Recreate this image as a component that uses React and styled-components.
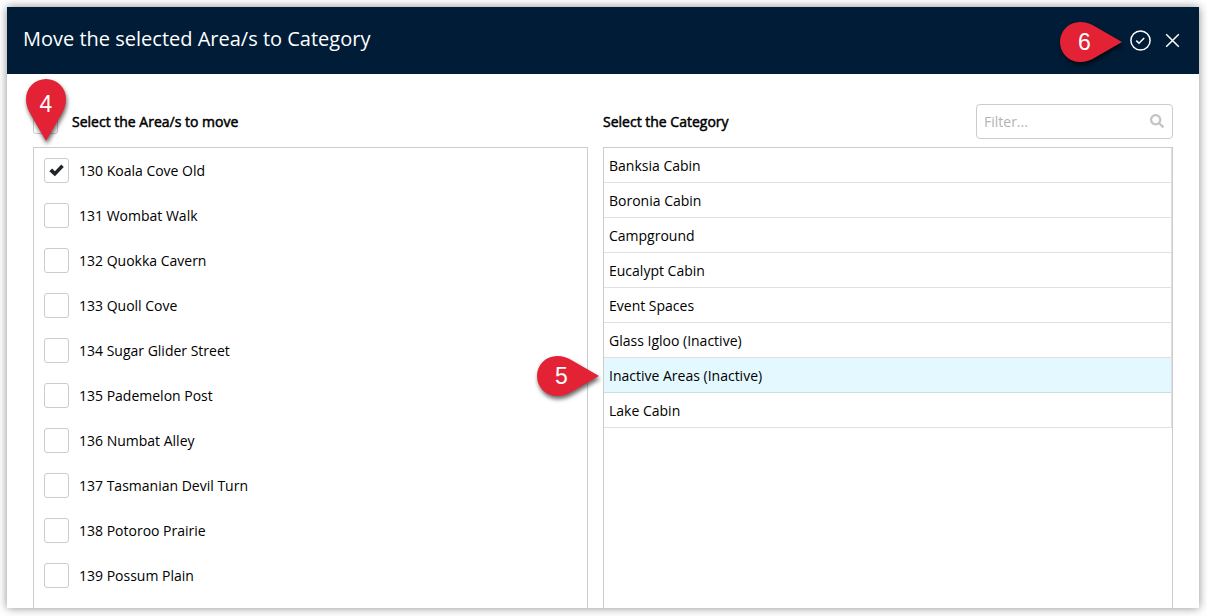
import React, { useState } from 'react';
import styled, { createGlobalStyle } from 'styled-components';
import { FaSearch } from 'react-icons/fa';

const GlobalStyle = createGlobalStyle`
  * {
    box-sizing: border-box;
  }

  body {
    margin: 0;
    background-color: #fff;
    color: #000;
    font-family: 'Open Sans', 'Noto Sans', sans-serif;
    font-size: 14px;
    overflow: hidden;
  }
`;

const Page = styled.div`
  height: 616px;
  padding: 7px 8px 8px 7px;
`;

const Dialog = styled.div`
  position: relative;
  display: flex;
  flex-direction: column;
  height: 601px;
  background-color: #fff;
  box-shadow: 0 0 9px rgba(0, 0, 0, 0.45);
`;

const Header = styled.header`
  display: flex;
  flex: none;
  align-items: center;
  justify-content: space-between;
  height: 67px;
  padding: 0 19px 0 16px;
  background-color: #001c36;
  color: #fff;
`;

const Title = styled.h1`
  margin: 0;
  padding-bottom: 5px;
  font-size: 20px;
  font-weight: 400;
  line-height: 27px;
`;

const HeaderActions = styled.div`
  display: flex;
  align-items: center;
  gap: 14px;
`;

const IconButton = styled.button`
  display: flex;
  padding: 0;
  border: 0;
  background: none;
  color: #fff;
`;

const Body = styled.div`
  display: flex;
  flex: 1;
  gap: 15px;
  min-height: 0;
  padding: 30px 26px 0;
`;

const Column = styled.section`
  display: flex;
  flex: none;
  flex-direction: column;
  width: ${({ $width }) => $width}px;
`;

const ColumnHeader = styled.div`
  display: flex;
  flex: none;
  align-items: center;
  height: 43px;
  padding-bottom: 8px;
`;

const ColumnTitle = styled.h2`
  flex: 1;
  margin: 0;
  font-size: 14px;
  font-weight: 400;
  line-height: 20px;
  -webkit-text-stroke: 0.5px #000;
`;

const Panel = styled.div`
  flex: 1;
  border: 1px solid #ccc;
  border-bottom: 0;
`;

const Checkbox = styled.span`
  display: flex;
  flex: none;
  align-items: center;
  justify-content: center;
  width: 25px;
  height: 25px;
  border: 1px solid #ccc;
  border-radius: 3px;
  background-color: #fff;
`;

const SelectAll = styled.label`
  display: flex;
  padding: 0 14px 0 0;
`;

const AreaRow = styled.label`
  display: flex;
  align-items: center;
  gap: 10px;
  height: 45px;
  padding-left: 10px;
`;

const CategoryRow = styled.div`
  height: 35px;
  padding-left: 5px;
  border-right: 1px solid #e0e0e0;
  border-bottom: 1px solid ${({ $selected }) => ($selected ? '#c8dfe4' : '#e0e0e0')};
  background-color: ${({ $selected }) => ($selected ? '#e3f9ff' : '#fff')};
  line-height: 35px;
`;

const FilterBox = styled.div`
  display: flex;
  align-items: center;
  width: 197px;
  height: 35px;
  padding: 0 8px 2px 7px;
  border: 1px solid #ccc;
  border-radius: 4px;
  color: #c4c4c4;
`;

const FilterInput = styled.input`
  flex: 1;
  min-width: 0;
  padding: 2px 0 0;
  border: 0;
  outline: 0;
  font: inherit;

  &::placeholder {
    color: #b3b3b3;
  }
`;

const Marker = styled.div`
  position: absolute;
  left: ${({ $x }) => $x}px;
  top: ${({ $y }) => $y}px;
  width: ${({ $down }) => ($down ? 40 : 49)}px;
  height: 40px;
  padding-top: ${({ $down }) => ($down ? 5 : 0)}px;
  color: #fff;
  font-family: 'Liberation Sans', Arial, sans-serif;
  font-size: 23px;
  line-height: 40px;
  text-align: center;
`;

const MarkerShape = styled.svg`
  position: absolute;
  left: 0;
  top: 0;
  overflow: visible;
  filter: drop-shadow(1px 3px 2px rgba(0, 0, 0, 0.6));
`;

const MarkerText = styled.span`
  position: relative;
`;

const areas = [
  '130 Koala Cove Old',
  '131 Wombat Walk',
  '132 Quokka Cavern',
  '133 Quoll Cove',
  '134 Sugar Glider Street',
  '135 Pademelon Post',
  '136 Numbat Alley',
  '137 Tasmanian Devil Turn',
  '138 Potoroo Prairie',
  '139 Possum Plain',
];

const categories = [
  'Banksia Cabin',
  'Boronia Cabin',
  'Campground',
  'Eucalypt Cabin',
  'Event Spaces',
  'Glass Igloo (Inactive)',
  'Inactive Areas (Inactive)',
  'Lake Cabin',
];

const Tick = () => (
  <svg width="15" height="13" viewBox="0 0 15 13">
    <path d="M.3 7.300 3.100 4.600 5.900 7.200 12.300.4l2.500 2.500-8.900 9.300z" fill="#212529" />
  </svg>
);

const StepMarker = ({ x, y, down, children }) => (
  <Marker $x={x} $y={y} $down={down}>
    <MarkerShape width="40" height="40">
      <path
        d="M20 0C26 0 30.500 1.800 36 5L62 20 36 35C30.500 38.200 26 40 20 40A20 20 0 0 1 20 0z"
        fill="#e32236"
        transform={down ? 'rotate(90 20 20)' : undefined}
      />
    </MarkerShape>
    <MarkerText>{children}</MarkerText>
  </Marker>
);

const App = () => {
  const [filter, setFilter] = useState('');

  return (
    <>
      <GlobalStyle />
      <Page>
        <Dialog>
          <Header>
            <Title>Move the selected Area/s to Category</Title>
            <HeaderActions>
              <IconButton aria-label="Save">
                <svg width="21" height="21" fill="none" stroke="currentColor" strokeWidth="1.5">
                  <circle cx="10.5" cy="10.5" r="9.600" />
                  <path d="m6.300 10.600 2.700 2.700 5.200-5.400" />
                </svg>
              </IconButton>
              <IconButton aria-label="Close">
                <svg width="15" height="15" fill="none" stroke="currentColor" strokeWidth="1.500">
                  <path d="m1.200 1.200 12.600 12.600M13.800 1.200 1.200 13.800" />
                </svg>
              </IconButton>
            </HeaderActions>
          </Header>
          <Body>
            <Column $width={555}>
              <ColumnHeader>
                <SelectAll>
                  <Checkbox />
                </SelectAll>
                <ColumnTitle>Select the Area/s to move</ColumnTitle>
              </ColumnHeader>
              <Panel>
                {areas.map((area, index) => (
                  <AreaRow key={area}>
                    <Checkbox>{index === 0 && <Tick />}</Checkbox>
                    {area}
                  </AreaRow>
                ))}
              </Panel>
            </Column>
            <Column $width={570}>
              <ColumnHeader>
                <ColumnTitle>Select the Category</ColumnTitle>
                <FilterBox>
                  <FilterInput
                    placeholder="Filter..."
                    value={filter}
                    onChange={(e) => setFilter(e.target.value)}
                  />
                  <FaSearch size={14} />
                </FilterBox>
              </ColumnHeader>
              <Panel>
                {categories
                  .filter((name) => name.toLowerCase().includes(filter.toLowerCase()))
                  .map((name) => (
                    <CategoryRow key={name} $selected={name === 'Inactive Areas (Inactive)'}>
                      {name}
                    </CategoryRow>
                  ))}
              </Panel>
            </Column>
          </Body>
          <StepMarker x={19} y={72} down>
            4
          </StepMarker>
          <StepMarker x={530} y={349}>
            5
          </StepMarker>
          <StepMarker x={1053} y={15}>
            6
          </StepMarker>
        </Dialog>
      </Page>
    </>
  );
};

export default App;
